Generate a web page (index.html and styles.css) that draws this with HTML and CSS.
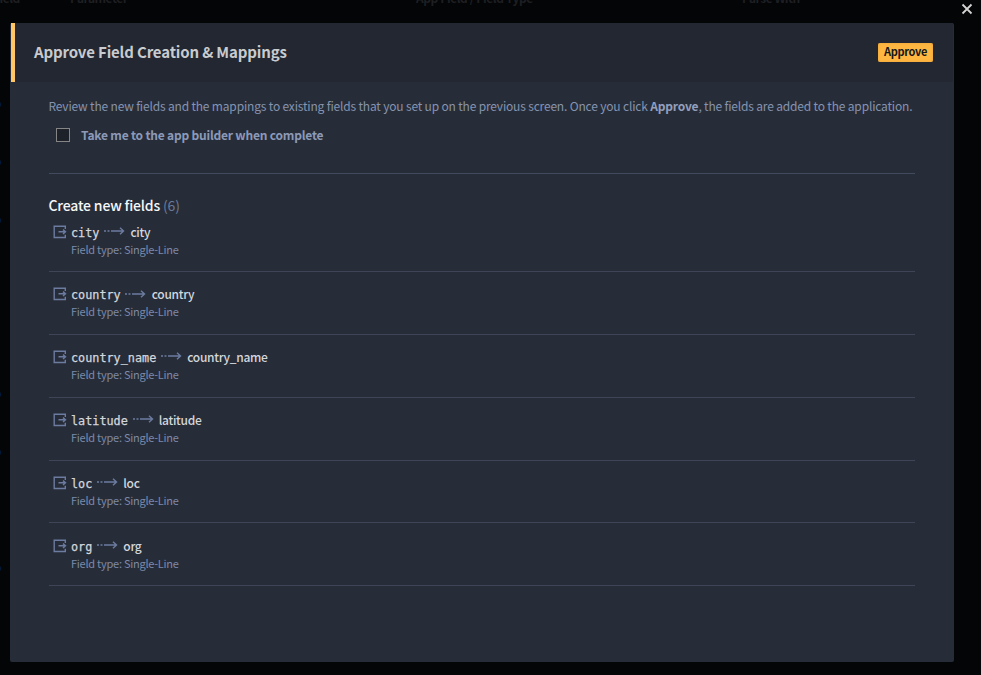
FILE: index.html
```html
<!DOCTYPE html>
<html lang="en">
<head>
<meta charset="utf-8">
<title>Approve Field Creation &amp; Mappings</title>
<link rel="stylesheet" href="styles.css">
</head>
<body>
<svg width="0" height="0" class="defs">
  <symbol id="export" viewBox="0 0 14 14"><path d="M12.3 4V1.2H1.2v11.3h11.1V9.7M5.5 6.8h7M10 4.6l2.5 2.2L10 9"/></symbol>
  <symbol id="arrow" viewBox="0 0 22 10"><path d="M1 5h2M4.5 5h2M8 5h12.5M17 1.8 20.5 5 17 8.2"/></symbol>
</svg>
<div class="backdrop">
  <span class="col col-a">Field</span><span class="col col-b">Parameter</span><span class="col col-c">App Field / Field Type</span><span class="col col-d">Parse With</span>
  <i class="dot d1"></i><i class="dot d2"></i><i class="dot d3"></i><i class="dot d4"></i><i class="dot d5"></i><i class="dot d6"></i>
</div>
<svg class="close" viewBox="0 0 12 12"><path d="M1.5 1.5l9 9M10.5 1.5l-9 9"/></svg>
<main class="modal">
  <header class="head">
    <h1>Approve Field Creation &amp; Mappings</h1>
    <button class="approve">Approve</button>
  </header>
  <div class="body">
    <p class="intro"><span>Review the new fields and the mappings to existing fields that you set up on the previous screen. Once you click <b>Approve</b>, the fields are added to the application.</span></p>
    <div class="check"><span class="box"></span><span class="check-label">Take me to the app builder when complete</span></div>
    <h2><span class="h2-label">Create new fields</span> <span class="count">(6)</span></h2>
    <ul>
      <li><svg class="export"><use href="#export"/></svg><div><div class="map"><code>city</code><svg class="arrow"><use href="#arrow"/></svg><span class="name">city</span></div><div class="type">Field type: Single-Line</div></div></li>
      <li><svg class="export"><use href="#export"/></svg><div><div class="map"><code>country</code><svg class="arrow"><use href="#arrow"/></svg><span class="name">country</span></div><div class="type">Field type: Single-Line</div></div></li>
      <li><svg class="export"><use href="#export"/></svg><div><div class="map"><code>country_name</code><svg class="arrow"><use href="#arrow"/></svg><span class="name">country_name</span></div><div class="type">Field type: Single-Line</div></div></li>
      <li><svg class="export"><use href="#export"/></svg><div><div class="map"><code>latitude</code><svg class="arrow"><use href="#arrow"/></svg><span class="name">latitude</span></div><div class="type">Field type: Single-Line</div></div></li>
      <li><svg class="export"><use href="#export"/></svg><div><div class="map"><code>loc</code><svg class="arrow"><use href="#arrow"/></svg><span class="name">loc</span></div><div class="type">Field type: Single-Line</div></div></li>
      <li><svg class="export"><use href="#export"/></svg><div><div class="map"><code>org</code><svg class="arrow"><use href="#arrow"/></svg><span class="name">org</span></div><div class="type">Field type: Single-Line</div></div></li>
    </ul>
  </div>
</main>
</body>
</html>
```
FILE: styles.css
```css
* { box-sizing: border-box; }
body {
  margin: 0;
  height: 675px;
  padding: 23px 27px 13px 10px;
  overflow: hidden;
  background: #040507;
  font-family: "Noto Sans CJK SC", "Noto Sans", sans-serif;
  white-space: nowrap;
}
.defs { position: absolute; }
symbol path, .close path { fill: none; stroke: currentColor; }
.backdrop { position: absolute; inset: 0; overflow: hidden; }
.col { position: absolute; top: -9px; font-size: 12px; line-height: 14px; font-weight: 700; letter-spacing: -0.5px; color: #1e1f22; }
.col-a { left: -7px; }
.col-b { left: 70px; }
.col-c { left: 416px; letter-spacing: -0.4px; }
.col-d { left: 742px; }
.dot { position: absolute; left: -8px; width: 9px; height: 9px; border-radius: 50%; background: #001b3b; }
.d1 { top: 100px; }
.d2 { top: 158px; }
.d3 { top: 216px; }
.d4 { top: 390px; }
.d5 { top: 448px; }
.d6 { top: 564px; }
.close { position: absolute; left: 961px; top: 3px; width: 12px; height: 12px; color: #d4d4d4; stroke-width: 1.8; }
.modal { position: relative; height: 639px; border-radius: 2px; background: #272d38; }
.head {
  height: 59px;
  margin: 0 1px;
  padding: 0 20px 0 19px;
  border-left: 4px solid #ffc766;
  background: #222731;
  display: flex;
  align-items: center;
  justify-content: space-between;
}
h1 { margin: 0 0 2px; font-size: 15px; line-height: 22px; font-weight: 700; letter-spacing: -0.15px; color: #c9cbce; }
.approve {
  width: 55px;
  height: 19px;
  padding: 0 0 2px;
  border: 0;
  border-radius: 2px;
  background: #ffb742;
  box-shadow: inset 0 0 3px #e9a137;
  color: #15171a;
  font: 700 11px/17px "Noto Sans CJK SC", sans-serif;
  letter-spacing: -0.35px;
}
.body { padding: 14px 39px 0 38.5px; }
.intro { margin: 0; font-size: 12px; line-height: 20px; letter-spacing: -0.175px; color: #8593b0; }
.intro b { color: #929fbd; }
.check {
  height: 58px;
  padding: 12px 0 0 7.5px;
  display: flex;
  align-items: flex-start;
  gap: 11px;
  border-bottom: 1px solid #424b5e;
}
.box { width: 14px; height: 14px; border: 1px solid #858585; background: #1d212a; }
.check-label { margin-top: -1px; font-size: 12px; line-height: 16px; font-weight: 700; letter-spacing: -0.2px; color: #8c9ab8; }
h2 { margin: 20px 0 0; font-size: 14px; line-height: 22px; font-weight: 500; letter-spacing: -0.17px; color: #f6f7f8; }
.count { color: #6c7a9a; font-weight: 400; }
ul { list-style: none; margin: -6.6px 0 0; padding: 0; }
li { height: 62.8px; padding: 13.2px 0 0 4px; display: flex; gap: 4.5px; border-bottom: 1px solid #3d4557; }
.export { width: 14px; height: 14px; margin-top: 2px; color: #6c7ba0; stroke-width: 1.4; }
.map { display: flex; height: 18px; line-height: 18px; align-items: center; color: #d3d6dc; }
code { margin-top: 2px; font: 11.8px/18px "DejaVu Sans Mono", monospace; -webkit-text-stroke: 0.25px currentColor; }
.arrow { width: 22px; height: 10px; margin: -1.6px 5.3px 0 3.7px; color: #6c7ba0; stroke-width: 1.4; }
.name { font-size: 12px; font-weight: 500; letter-spacing: -0.3px; }
.type { font-size: 11px; line-height: 17px; letter-spacing: -0.25px; color: #7c8aaa; }
```
